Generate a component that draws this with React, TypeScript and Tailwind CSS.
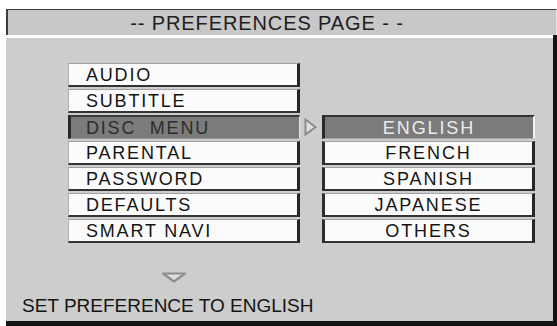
const leftItems = ['AUDIO', 'SUBTITLE', 'DISC\u00a0\u00a0MENU', 'PARENTAL', 'PASSWORD', 'DEFAULTS', 'SMART NAVI']
const rightItems = ['ENGLISH', 'FRENCH', 'SPANISH', 'JAPANESE', 'OTHERS']

export default function App() {
  return (
    <div
      className="w-[557px] h-[326px] bg-white overflow-hidden pt-[9px] pl-[6px]"
      style={{ fontFamily: '"Liberation Sans", Arial, sans-serif' }}
    >
      <div className="w-[551px] h-[317px] flex flex-col">
        {/* Titre */}
        <div className="h-[26px] flex-shrink-0 bg-[#c8c8c8] border-t border-l-2 border-r border-t-[#3c3c3c] border-l-[#3c3c3c] border-r-[#e4e4e4] flex items-center justify-center pr-[30px]">
          <span className="text-[20px] leading-none tracking-[0.9px] text-[#1e1e1e]">-- PREFERENCES PAGE - -</span>
        </div>

        {/* Corps */}
        <div className="flex-1 flex flex-col border-r-4 border-b-[5px] border-[#151515]">
          <div className="h-[3px] bg-white flex-shrink-0" />
          <div className="flex-1 bg-[#cdcdcd] flex flex-col pl-[62px] pt-[25px]">
            <div className="flex items-start">
              {/* Menu gauche */}
              <div className="w-[232px] flex flex-col gap-[2px]">
                {leftItems.map((item, i) => {
                  const active = i === 2
                  return (
                    <div
                      key={item}
                      className={
                        active
                          ? 'h-[24px] flex items-center pl-[15px] bg-[#7b7b7b] border-t-2 border-l-[3px] border-r border-b border-t-[#3a3a3a] border-l-[#2a2a2a] border-r-[#e8e8e8] border-b-[#9a9a9a] text-[18px] leading-none tracking-[1.8px] text-[#2c2c2c]'
                          : 'h-[24px] flex items-center pl-[17px] bg-[#fbfbfb] border-t border-l border-r-[3px] border-b-2 border-t-[#a0a0a0] border-l-[#b0b0b0] border-r-[#262626] border-b-[#333333] text-[18px] leading-none tracking-[1.8px] text-[#141414]'
                      }
                    >
                      {item}
                    </div>
                  )
                })}
              </div>

              {/* Flèche droite */}
              <div className="w-[22px] pt-[55px] flex justify-center pr-[2px]">
                <svg width="13" height="18" viewBox="0 0 13 18">
                  <polygon points="1.5,1.5 11.5,9 1.5,16.5" fill="#e2e2e2" stroke="#8c8c8c" strokeWidth="2" />
                </svg>
              </div>

              {/* Sous-menu */}
              <div className="w-[213px] flex flex-col gap-[2px] pt-[52px]">
                {rightItems.map((item, i) => {
                  const active = i === 0
                  return (
                    <div
                      key={item}
                      className={
                        active
                          ? 'h-[24px] flex items-center justify-center bg-[#7b7b7b] border-t-2 border-l-[3px] border-r-2 border-b border-t-[#333333] border-l-[#2a2a2a] border-r-[#f2f2f2] border-b-[#a8a8a8] text-[18px] leading-none tracking-[1.9px] text-[#ececec]'
                          : 'h-[24px] flex items-center justify-center bg-[#fbfbfb] border-t border-l-[3px] border-r-[3px] border-b-2 border-t-[#a0a0a0] border-l-[#2e2e2e] border-r-[#262626] border-b-[#333333] text-[18px] leading-none tracking-[1.9px] text-[#141414]'
                      }
                    >
                      {item}
                    </div>
                  )
                })}
              </div>
            </div>

            {/* Flèche bas */}
            <div className="w-[232px] flex justify-start pl-[93px] mt-[29px]">
              <svg width="26" height="11" viewBox="0 0 26 11">
                <polygon points="2,1.5 24,1.5 13,9.5" fill="#dedede" stroke="#8e8e8e" strokeWidth="2.2" strokeLinejoin="round" />
              </svg>
            </div>

            {/* Ligne d'état */}
            <p className="-ml-[46px] mt-[12px] text-[19px] leading-[22px] text-[#141414]">SET PREFERENCE TO ENGLISH</p>
          </div>
        </div>
      </div>
    </div>
  )
}
